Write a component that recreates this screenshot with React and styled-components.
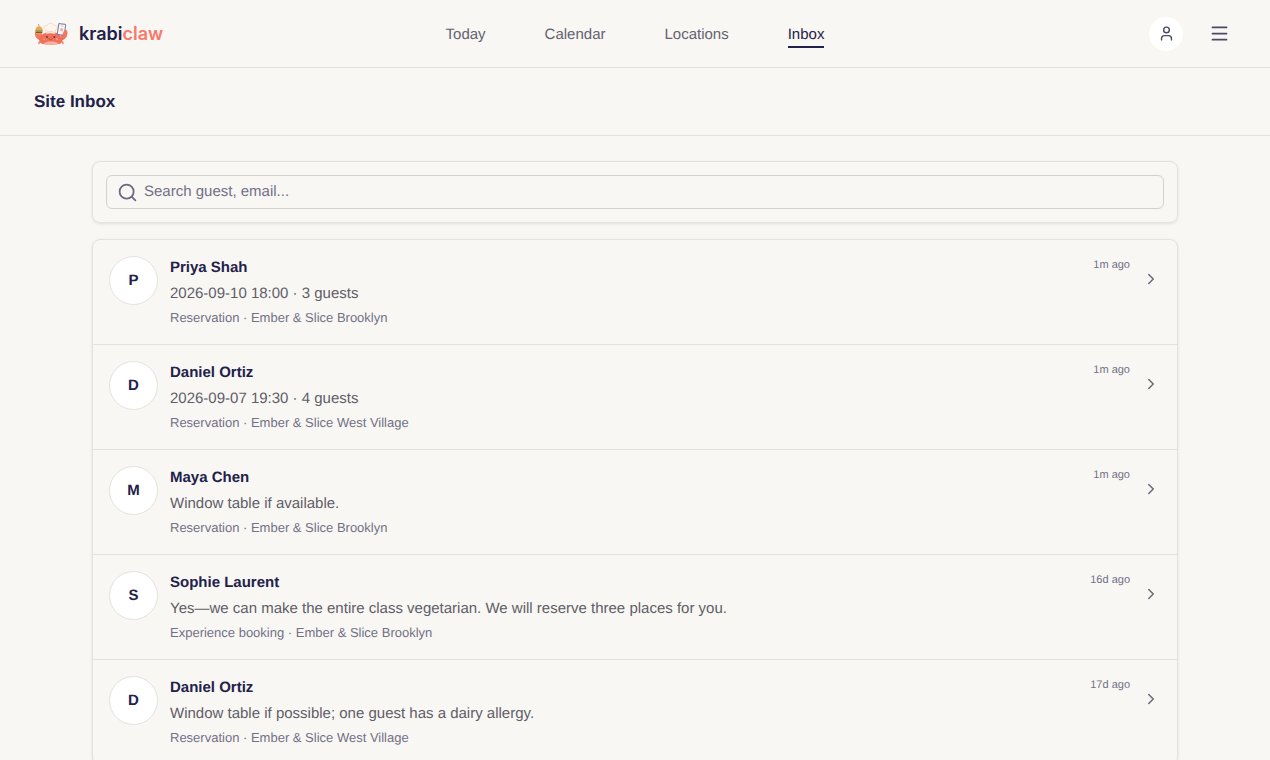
import React from "react";
import styled, { createGlobalStyle } from "styled-components";
import { ChevronRight, Menu, Search, User } from "lucide-react";

const GlobalStyle = createGlobalStyle`
  * {
    box-sizing: border-box;
  }

  body {
    margin: 0;
    background: #f8f7f3;
    color: #22214a;
    font-family: "Liberation Sans", Arial, sans-serif;
    font-size: 15px;
    text-rendering: geometricPrecision;
  }
`;

const Header = styled.header`
  display: grid;
  grid-template-columns: 1fr auto 1fr;
  align-items: center;
  height: 68px;
  padding: 0 34px;
  border-bottom: 1px solid #e3e2df;
`;

const Brand = styled.a`
  display: flex;
  align-items: center;
  gap: 11px;
  color: #22214a;
  font-family: Inter, sans-serif;
  font-size: 18px;
  font-weight: 600;
  text-decoration: none;
  text-rendering: auto;
`;

const Accent = styled.span`
  color: #fb7868;
`;

const Nav = styled.nav`
  display: flex;
  gap: 59px;
`;

const NavLink = styled.a`
  padding-top: 4px;
  border-bottom: 2px solid ${({ $active }) => ($active ? "#22214a" : "transparent")};
  color: ${({ $active }) => ($active ? "#22214a" : "#64626f")};
  line-height: 22px;
  text-decoration: none;
`;

const Actions = styled.div`
  display: flex;
  justify-content: flex-end;
  align-items: center;
  gap: 19px;
`;

const IconButton = styled.button`
  display: flex;
  justify-content: center;
  align-items: center;
  width: 34px;
  height: 34px;
  padding: 0;
  border: 0;
  border-radius: 50%;
  background: ${({ $filled }) => ($filled ? "#ffffff" : "transparent")};
  color: #4b4964;
  cursor: pointer;
`;

const TitleBar = styled.div`
  display: flex;
  align-items: center;
  height: 68px;
  padding: 0 34px;
  border-bottom: 1px solid #e3e2df;
`;

const Title = styled.h1`
  margin: 0;
  font-size: 17px;
  line-height: 24px;
`;

const Main = styled.main`
  display: flex;
  flex-direction: column;
  gap: 16px;
  max-width: 1086px;
  margin: 0 auto;
  padding: 25px 0;
`;

const Card = styled.section`
  border: 1px solid #e3e2df;
  border-radius: 8px;
  box-shadow: 0 1px 3px rgba(34, 33, 74, 0.1);
`;

const SearchCard = styled(Card)`
  padding: 13px;
`;

const SearchField = styled.label`
  display: flex;
  align-items: center;
  gap: 6px;
  height: 34px;
  padding: 0 10px;
  border: 1px solid #d2d1cf;
  border-radius: 6px;
  color: #6b6982;
`;

const SearchInput = styled.input`
  flex: 1;
  min-width: 0;
  height: 30px;
  padding: 0 0 2px;
  border: 0;
  outline: 0;
  background: transparent;
  color: #22214a;
  font: inherit;
  text-rendering: inherit;

  &::placeholder {
    color: #737087;
    opacity: 1;
  }
`;

const List = styled.ul`
  margin: 0;
  padding: 0;
  list-style: none;
`;

const Item = styled.li`
  border-bottom: 1px solid #e3e2df;

  &:last-child {
    border-bottom: 0;
  }
`;

const Row = styled.a`
  display: flex;
  align-items: flex-start;
  gap: 12px;
  padding: 16px 17px 16px 16px;
  color: inherit;
  text-decoration: none;
`;

const Avatar = styled.span`
  display: flex;
  flex-shrink: 0;
  justify-content: center;
  align-items: center;
  width: 49px;
  height: 49px;
  border: 1px solid #e3e2df;
  border-radius: 50%;
  background: #ffffff;
  font-weight: 700;
`;

const Details = styled.div`
  display: flex;
  flex: 1;
  flex-direction: column;
  gap: 3px;
  min-width: 0;
`;

const Name = styled.strong`
  line-height: 24px;
`;

const Preview = styled.span`
  color: #5f5d68;
  line-height: 22px;
`;

const Meta = styled.span`
  color: #737087;
  font-size: 13px;
  line-height: 20px;
`;

const Time = styled.time`
  color: #737087;
  font-size: 11px;
  line-height: 19px;
`;

const Arrow = styled.span`
  display: flex;
  align-items: center;
  height: 46px;
  color: #6b6975;
`;

const navItems = ["Today", "Calendar", "Locations", "Inbox"];

const messages = [
  {
    name: "Priya Shah",
    preview: "2026-09-10 18:00 · 3 guests",
    meta: "Reservation · Ember & Slice Brooklyn",
    time: "1m ago",
  },
  {
    name: "Daniel Ortiz",
    preview: "2026-09-07 19:30 · 4 guests",
    meta: "Reservation · Ember & Slice West Village",
    time: "1m ago",
  },
  {
    name: "Maya Chen",
    preview: "Window table if available.",
    meta: "Reservation · Ember & Slice Brooklyn",
    time: "1m ago",
  },
  {
    name: "Sophie Laurent",
    preview: "Yes—we can make the entire class vegetarian. We will reserve three places for you.",
    meta: "Experience booking · Ember & Slice Brooklyn",
    time: "16d ago",
  },
  {
    name: "Daniel Ortiz",
    preview: "Window table if possible; one guest has a dairy allergy.",
    meta: "Reservation · Ember & Slice West Village",
    time: "17d ago",
  },
];

const CrabLogo = () => (
  <svg width="34" height="22" viewBox="0 0 102 66" aria-hidden="true">
    {/* arms and claws */}
    <path d="M28 49C16 49 10 42 10 34M74 49c13 0 18-7 18-15" fill="none" stroke="#ee6650" strokeWidth="10" strokeLinecap="round" />
    <path d="M4 27c-3 9 1 19 9 19 8 0 13-6 11-14l-9-1zM98 20c4 11 2 25-7 26-7 0-12-6-10-12l9-2z" fill="#f5775f" />
    {/* legs */}
    <path d="M22 54l-7 4v4M80 54l7 4v4" fill="none" stroke="#e98573" strokeWidth="4" strokeLinecap="round" />
    {/* body */}
    <path d="M16 54c2-17 13-27 35-27s32 10 34 27c0 7-9 11-34 11S16 61 16 54z" fill="#f1705a" />
    <path d="M29 61c10-7 34-7 44 0-7 5-37 5-44 0z" fill="#f8b39a" />
    <circle cx="39" cy="42" r="3" fill="#5d3848" />
    <circle cx="61" cy="42" r="3" fill="#5d3848" />
    <path d="M45 47c2 5 8 5 10 0" fill="none" stroke="#8f3c40" strokeWidth="2" strokeLinecap="round" />
    <circle cx="31" cy="49" r="3" fill="#f99a88" />
    <circle cx="69" cy="49" r="3" fill="#f99a88" />
    {/* chef hat */}
    <path d="M37 32l-2-12c-9-3-6-14 4-12 4-9 18-9 22 0 10-2 13 9 4 12l-2 12c-7-3-19-3-26 0z" fill="#fff5ec" stroke="#edcdbb" strokeWidth="2" />
    <path d="M38 28c7-3 17-3 24 0" fill="none" stroke="#e5b8a4" strokeWidth="2" />
    {/* burger */}
    <path d="M13 3l3 7" stroke="#d99a5c" strokeWidth="3" />
    <path d="M4 23c0-18 22-18 22 0z" fill="#eba650" />
    <path d="M4 22h22v4H4z" fill="#84954b" />
    <path d="M5 26h20v4H5z" fill="#875038" />
    <path d="M5 30h20c0 6-20 6-20 0z" fill="#e9a04d" />
    {/* phone */}
    <g transform="rotate(8 84 20)">
      <rect x="72" y="3" width="21" height="33" rx="3" fill="#f9f7fa" stroke="#747896" strokeWidth="3" />
      <path d="M79 9h8" stroke="#bbb8c8" strokeWidth="2" />
      <path d="M79 16h8v9h-8z" fill="#f3b0a4" />
    </g>
    <path d="M92 20c7 0 10 10 6 16-4 5-11 2-13-2z" fill="#f5775f" />
  </svg>
);

const MessageRow = ({ name, preview, meta, time }) => (
  <Item>
    <Row href="#">
      <Avatar>{name[0]}</Avatar>
      <Details>
        <Name>{name}</Name>
        <Preview>{preview}</Preview>
        <Meta>{meta}</Meta>
      </Details>
      <Time>{time}</Time>
      <Arrow>
        <ChevronRight size={18} />
      </Arrow>
    </Row>
  </Item>
);

const App = () => {
  return (
    <>
      <GlobalStyle />
      <Header>
        <Brand href="#">
          <CrabLogo />
          <span>
            krabi<Accent>claw</Accent>
          </span>
        </Brand>
        <Nav>
          {navItems.map((item) => (
            <NavLink key={item} href="#" $active={item === "Inbox"}>
              {item}
            </NavLink>
          ))}
        </Nav>
        <Actions>
          <IconButton $filled aria-label="Account">
            <User size={17} />
          </IconButton>
          <IconButton aria-label="Menu">
            <Menu size={21} />
          </IconButton>
        </Actions>
      </Header>
      <TitleBar>
        <Title>Site Inbox</Title>
      </TitleBar>
      <Main>
        <SearchCard>
          <SearchField>
            <Search size={21} />
            <SearchInput type="search" aria-label="Search guest or email" placeholder="Search guest, email..." />
          </SearchField>
        </SearchCard>
        <Card>
          <List>
            {messages.map((message, i) => (
              <MessageRow key={i} {...message} />
            ))}
          </List>
        </Card>
      </Main>
    </>
  );
};

export default App;
